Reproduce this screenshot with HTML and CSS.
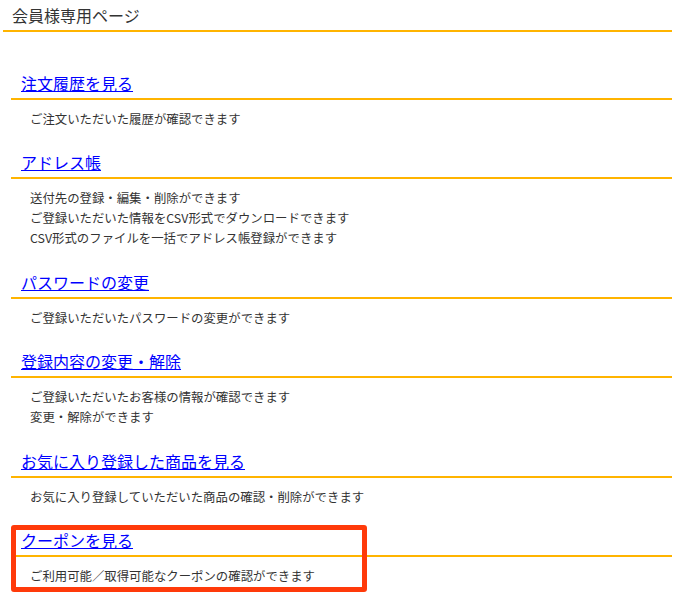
FILE: index.html
```html
<!DOCTYPE html>
<html lang="ja">
<head>
<meta charset="utf-8">
<title>会員様専用ページ</title>
<link rel="stylesheet" href="styles.css">
</head>
<body>
<div class="page">
  <h1 class="page-title">会員様専用ページ</h1>
  <div class="sections">
    <section class="item">
      <h2 class="item-title"><a href="#">注文履歴を見る</a></h2>
      <div class="item-desc">ご注文いただいた履歴が確認できます</div>
    </section>
    <section class="item">
      <h2 class="item-title"><a href="#">アドレス帳</a></h2>
      <div class="item-desc">送付先の登録・編集・削除ができます<br>ご登録いただいた情報をCSV形式でダウンロードできます<br>CSV形式のファイルを一括でアドレス帳登録ができます</div>
    </section>
    <section class="item">
      <h2 class="item-title"><a href="#">パスワードの変更</a></h2>
      <div class="item-desc">ご登録いただいたパスワードの変更ができます</div>
    </section>
    <section class="item">
      <h2 class="item-title"><a href="#">登録内容の変更・解除</a></h2>
      <div class="item-desc">ご登録いただいたお客様の情報が確認できます<br>変更・解除ができます</div>
    </section>
    <section class="item">
      <h2 class="item-title"><a href="#">お気に入り登録した商品を見る</a></h2>
      <div class="item-desc">お気に入り登録していただいた商品の確認・削除ができます</div>
    </section>
    <section class="item item-marked">
      <h2 class="item-title"><a href="#">クーポンを見る</a></h2>
      <div class="item-desc">ご利用可能／取得可能なクーポンの確認ができます</div>
      <span class="highlight"></span>
    </section>
  </div>
</div>
</body>
</html>
```

FILE: styles.css
```css
html, body {
  margin: 0;
  padding: 0;
  background: #ffffff;
}

body {
  font-family: "Noto Sans CJK JP", "Noto Sans", sans-serif;
  color: #333333;
}

.page {
  margin-left: 3px;
  width: 669px;
}

.page-title {
  margin: 0;
  padding: 5px 0 5px 9px;
  font-size: 16px;
  line-height: 20px;
  font-weight: normal;
  color: #333333;
  border-bottom: 2px solid #ffb400;
}

.sections {
  margin-top: 41px;
  margin-left: 8px;
}

.item {
  margin-bottom: 23.4px;
}

.item-title {
  margin: 0;
  padding: 0 0 5px 10px;
  font-size: 16px;
  line-height: 20px;
  font-weight: normal;
  border-bottom: 2px solid #ffb400;
}

.item-title a {
  color: #0000ff;
  text-decoration: underline;
}

.item-desc {
  padding: 9px 0 0 19px;
  font-size: 12.4px;
  line-height: 20px;
  color: #333333;
}

.item-marked {
  position: relative;
}

.highlight {
  position: absolute;
  top: -5px;
  left: 0;
  width: 356px;
  bottom: -6px;
  border: 5px solid #ff3a0a;
  border-radius: 3px;
  box-sizing: border-box;
  pointer-events: none;
}
```
